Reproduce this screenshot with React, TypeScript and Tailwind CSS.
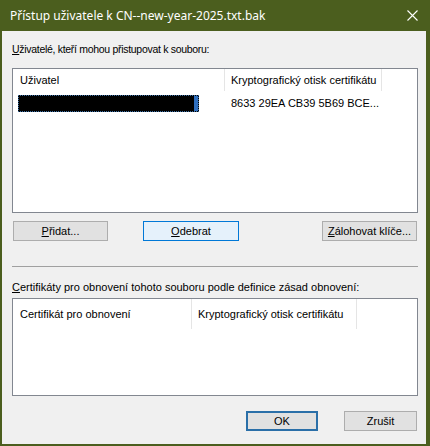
import React from "react";

const ui = { fontFamily: '"Liberation Sans", Arial, sans-serif' };
const title = { fontFamily: '"Noto Sans", "Liberation Sans", sans-serif' };

function Btn({ children, className = "" }: { children: React.ReactNode; className?: string }) {
  return (
    <div
      className={`h-[20px] flex items-center justify-center text-[11px] text-black border border-[#adadad] bg-[#e1e1e1] ${className}`}
    >
      {children}
    </div>
  );
}

export default function App() {
  return (
    <div className="w-[430px] h-[446px] bg-[#4b5e1e] flex flex-col" style={ui}>
      <div className="h-[31px] flex items-center justify-between pl-[10px] pr-[12px] text-white">
        <span className="text-[12px]" style={title}>
          Přístup uživatele k CN--new-year-2025.txt.bak
        </span>
        <svg width="11" height="11" viewBox="0 0 11 11">
          <path d="M0.5 0.5 L10.5 10.5 M10.5 0.5 L0.5 10.5" stroke="white" strokeWidth="1.1" />
        </svg>
      </div>
      <div className="flex-1 ml-[2px] mr-[4px] mb-[2px] bg-[#f0f0f0] pl-[10px] pr-[8px] flex flex-col">
        <div className="mt-[11px] h-[15px] leading-[15px] text-[10.5px] tracking-[-0.3px] text-black">
          <u>U</u>živatelé, kteří mohou přistupovat k souboru:
        </div>
        <div className="mt-[11px] h-[145px] border border-[#828790] bg-white flex flex-col text-[11px] text-black">
          <div className="h-[22px] flex">
            <div className="w-[212px] pl-[7px] flex items-center border-r border-[#e5e5e5]">Uživatel</div>
            <div className="w-[157px] pl-[6px] flex items-center border-r border-[#e5e5e5]">
              Kryptografický otisk certifikátu
            </div>
          </div>
          <div className="mt-[4px] h-[17px] flex items-center">
            <div className="ml-[5px] w-[181px] h-[17px] bg-black border border-dotted border-[#3a6ea5] relative">
              <div className="absolute right-0 top-0 w-[4px] h-full bg-[#2f6fbf]" />
            </div>
            <div className="ml-[32px]">8633 29EA CB39 5B69 BCE...</div>
          </div>
        </div>
        <div className="mt-[8px] flex items-center">
          <Btn className="ml-[1px] w-[95px]">
            <span>
              <u>P</u>řidat...
            </span>
          </Btn>
          <Btn className="ml-[35px] w-[96px] !border-[#0078d7] !bg-[#e5f1fb]">
            <span>
              <u>O</u>debrat
            </span>
          </Btn>
          <div className="flex-1" />
          <Btn className="w-[95px] mr-[1px]">
            <span>
              <u>Z</u>álohovat klíče...
            </span>
          </Btn>
        </div>
        <div className="mt-[25px] h-[1px] bg-[#a0a0a0]" />
        <div className="mt-[13px] h-[14px] leading-[14px] text-[11px] text-black">
          <u>C</u>ertifikáty pro obnovení tohoto souboru podle definice zásad obnovení:
        </div>
        <div className="mt-[4px] h-[98px] border border-[#828790] bg-white flex flex-col text-[11px] text-black">
          <div className="h-[30px] flex">
            <div className="w-[179px] pl-[7px] flex items-center border-r border-[#e5e5e5]">
              Certifikát pro obnovení
            </div>
            <div className="w-[165px] pl-[6px] flex items-center border-r border-[#e5e5e5]">
              Kryptografický otisk certifikátu
            </div>
          </div>
        </div>
        <div className="mt-[15px] flex justify-end">
          <Btn className="w-[72px] !border-2 !border-[#2a6fa8]">OK</Btn>
          <Btn className="ml-[26px] w-[73px] mr-[1px]">Zrušit</Btn>
        </div>
      </div>
    </div>
  );
}
